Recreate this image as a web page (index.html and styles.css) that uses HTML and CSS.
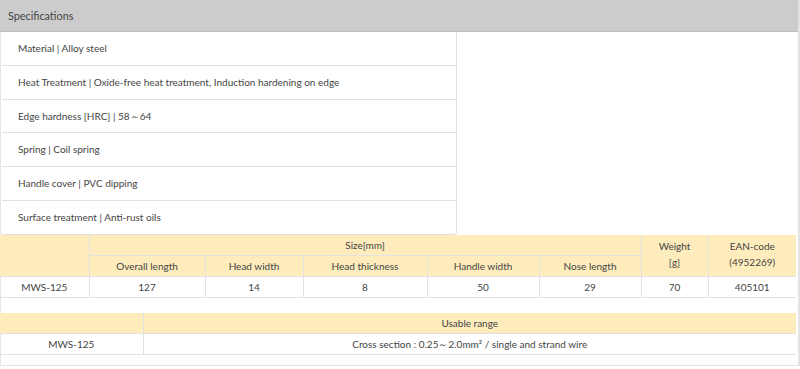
FILE: index.html
```html
<!DOCTYPE html>
<html lang="en">
<head>
    <meta charset="UTF-8">
    <title>Specifications</title>
    <link rel="stylesheet" href="styles.css">
</head>
<body>
    <div class="panel">
        <div class="panel-title">Specifications</div>

        <ul class="spec-list">
            <li>Material | Alloy steel</li>
            <li>Heat Treatment | Oxide-free heat treatment, Induction hardening on edge</li>
            <li>Edge hardness [HRC] | 58～64</li>
            <li>Spring | Coil spring</li>
            <li>Handle cover | PVC dipping</li>
            <li>Surface treatment | Anti-rust oils</li>
        </ul>

        <table class="spec-table">
            <colgroup>
                <col style="width: 89px">
                <col style="width: 116px">
                <col style="width: 98px">
                <col style="width: 124px">
                <col style="width: 112px">
                <col style="width: 102px">
                <col style="width: 67px">
                <col>
            </colgroup>
            <tr class="head">
                <th rowspan="2"></th>
                <th colspan="5">Size[mm]</th>
                <th rowspan="2" class="top">Weight<br>[g]</th>
                <th rowspan="2" class="top">EAN-code<br>(4952269)</th>
            </tr>
            <tr class="head">
                <th>Overall length</th>
                <th>Head width</th>
                <th>Head thickness</th>
                <th>Handle width</th>
                <th>Nose length</th>
            </tr>
            <tr>
                <td>MWS-125</td>
                <td>127</td>
                <td>14</td>
                <td>8</td>
                <td>50</td>
                <td>29</td>
                <td>70</td>
                <td>405101</td>
            </tr>
        </table>

        <table class="spec-table range-table">
            <colgroup>
                <col style="width: 143px">
                <col>
            </colgroup>
            <tr class="head">
                <th></th>
                <th>Usable range</th>
            </tr>
            <tr>
                <td>MWS-125</td>
                <td>Cross section : 0.25～2.0mm² / single and strand wire</td>
            </tr>
        </table>
    </div>
</body>
</html>
```

FILE: styles.css
```css
body {
    margin: 0;
    font-family: Lato, "Open Sans", sans-serif;
    font-size: 10px;
    color: #444;
    background-color: #fff;
}

.panel {
    width: 797px;
    border-left: 1px solid #e6e6e6;
    border-right: 2px solid #e3e3e3;
    border-bottom: 1px solid #e3e3e3;
    padding-bottom: 10px;
}

.panel-title {
    background-color: #cccccc;
    border-bottom: 1px solid #bdbdbd;
    height: 31px;
    line-height: 31px;
    padding-left: 8px;
    margin-left: -1px;
    font-size: 10.8px;
    color: #444;
}

.spec-list {
    list-style: none;
    margin: 0 0 0 1px;
    padding: 0;
    width: 454px;
    border-right: 1px solid #e2e2e2;
    border-bottom: 1px solid #e2e2e2;
    border-radius: 0 0 3px 0;
}

.spec-list li {
    height: 32.8px;
    line-height: 32.8px;
    padding-left: 16px;
    border-top: 1px solid #e2e2e2;
}

.spec-list li:first-child {
    border-top: none;
}

.spec-table {
    width: 796px;
    margin-left: -1px;
    border-collapse: collapse;
    table-layout: fixed;
    margin-bottom: 15px;
}

.spec-table th,
.spec-table td {
    border: 1px solid #e2e2e2;
    text-align: center;
    font-weight: normal;
    height: 20px;
    padding: 0;
    line-height: 16px;
}

.spec-table tr:first-child th {
    border-top: none;
}

.spec-table th:first-child,
.spec-table td:first-child {
    border-left: none;
}

.spec-table th:last-child,
.spec-table td:last-child {
    border-right: none;
}

.spec-table .head th {
    background-color: #feecbd;
}

.spec-table th.top {
    vertical-align: top;
    padding-top: 3px;
}

.range-table {
    margin-bottom: 0;
}
```
